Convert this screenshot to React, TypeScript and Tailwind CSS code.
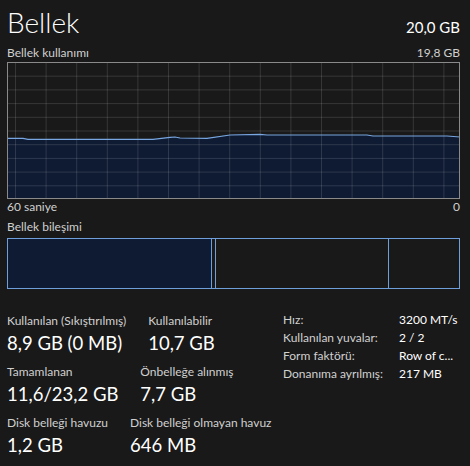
import React from "react";

const line: [number, number][] = [
  [0, 76.3], [16, 76.3], [21, 77.3], [146, 77.3], [163, 75.3], [168, 75],
  [173, 76], [200, 76.3], [223, 73], [253, 72.3], [260, 73], [360, 73],
  [366, 74], [440, 74], [453, 75],
];

function UsageChart() {
  const pts = line.map(([x, y]) => `${x},${y}`).join(" ");
  const verticals = Array.from({ length: 15 }, (_, i) => 8.5 + i * 30.6);
  const horizontals = Array.from({ length: 9 }, (_, i) => 13.7 * (i + 1) + 0.5);
  return (
    <svg width="453" height="137" viewBox="0 0 453 137" className="block">
      <polygon points={`${pts} 453,137 0,137`} fill="#0f1b33" />
      {verticals.map((x) => (
        <line key={x} x1={x} y1={0} x2={x} y2={137} stroke="#ffffff" strokeOpacity="0.13" strokeWidth="1" />
      ))}
      {horizontals.map((y) => (
        <line key={y} x1={0} y1={y} x2={453} y2={y} stroke="#ffffff" strokeOpacity="0.13" strokeWidth="1" />
      ))}
      <polyline points={pts} fill="none" stroke="#78a6e0" strokeWidth="1.2" />
      <rect x="0.5" y="0.5" width="452" height="136" fill="none" stroke="#8a8a8a" strokeWidth="1" />
    </svg>
  );
}

function Stat({ label, value }: { label: string; value: string }) {
  return (
    <div className="flex flex-col">
      <div className="text-[12px] leading-[16px] text-[#d0d0d0] whitespace-nowrap">{label}</div>
      <div className="mt-[2px] text-[18.5px] leading-[24px] text-white whitespace-nowrap">{value}</div>
    </div>
  );
}

const details = [
  ["Hız:", "3200 MT/s"],
  ["Kullanılan yuvalar:", "2 / 2"],
  ["Form faktörü:", "Row of c..."],
  ["Donanıma ayrılmış:", "217 MB"],
];

export default function App() {
  return (
    <div
      className="w-[470px] h-[466px] overflow-hidden bg-[#191919] text-white pl-[7px] pr-[10px] pt-[8px]"
      style={{ fontFamily: 'Lato, "Noto Sans", sans-serif' }}
    >
      <div className="flex items-baseline justify-between">
        <div className="text-[28px] leading-[29px] font-light">Bellek</div>
        <div className="text-[15px] leading-[20px]">20,0 GB</div>
      </div>

      <div className="mt-[8px] flex justify-between text-[12px] leading-[16px] text-[#d0d0d0]">
        <span>Bellek kullanımı</span>
        <span>19,8 GB</span>
      </div>
      <div className="mt-[1px]">
        <UsageChart />
      </div>
      <div className="flex justify-between text-[12px] leading-[16px] text-[#d0d0d0]">
        <span>60 saniye</span>
        <span>0</span>
      </div>

      <div className="mt-[4px] text-[12px] leading-[16px] text-[#d0d0d0]">Bellek bileşimi</div>
      <div className="mt-[3px] flex h-[51px] border border-[#6f9fdb]">
        <div className="w-[204px] bg-[#0f1b33] border-r border-[#6f9fdb]" />
        <div className="w-[3px]" />
        <div className="w-[174px] border-x border-[#6f9fdb]" />
        <div className="flex-1" />
      </div>

      <div className="mt-[24px] flex">
        <div className="flex-1 min-w-0 flex flex-col gap-[9px]">
          <div className="flex gap-[22px]">
            <Stat label="Kullanılan (Sıkıştırılmış)" value="8,9 GB (0 MB)" />
            <Stat label="Kullanılabilir" value="10,7 GB" />
          </div>
          <div className="flex gap-[22px]">
            <Stat label="Tamamlanan" value="11,6/23,2 GB" />
            <Stat label="Önbelleğe alınmış" value="7,7 GB" />
          </div>
          <div className="flex gap-[22px]">
            <Stat label="Disk belleği havuzu" value="1,2 GB" />
            <Stat label="Disk belleği olmayan havuz" value="646 MB" />
          </div>
        </div>
        <div className="w-[177px] shrink-0 -mt-[2px] flex flex-col text-[12px] leading-[18px] text-[#d0d0d0]">
          {details.map(([k, v]) => (
            <div key={k} className="flex">
              <span className="w-[116px] whitespace-nowrap">{k}</span>
              <span className="text-white whitespace-nowrap">{v}</span>
            </div>
          ))}
        </div>
      </div>
    </div>
  );
}
